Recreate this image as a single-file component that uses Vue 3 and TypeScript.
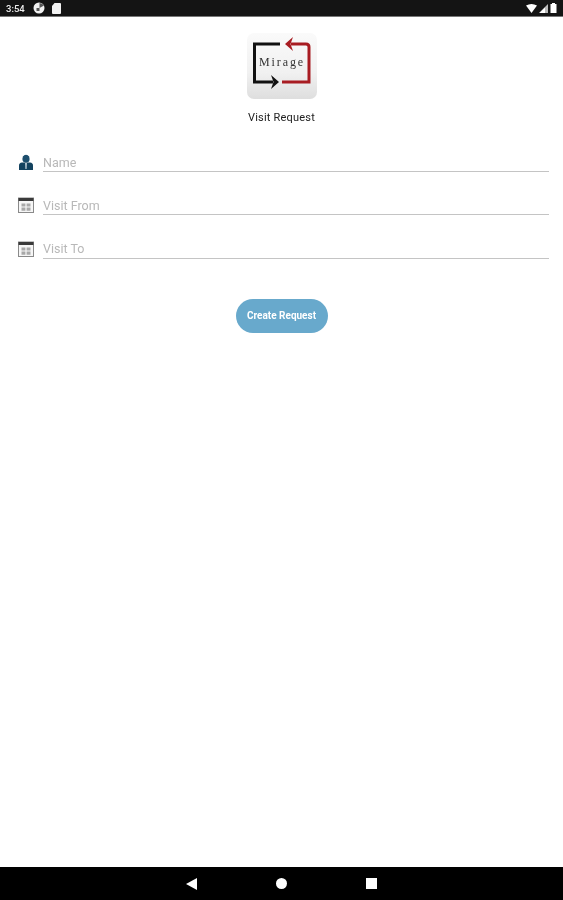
<script setup lang="ts">
const fields = [
  { key: "name", label: "Name", icon: "person" },
  { key: "from", label: "Visit From", icon: "calendar" },
  { key: "to", label: "Visit To", icon: "calendar" },
];
</script>

<template>
  <div class="screen">
    <header class="status-bar">
      <div class="status-left">
        <span class="clock">3:54</span>
        <svg class="status-icon" width="12" height="12" viewBox="0 0 12 12">
          <circle cx="6" cy="6" r="5.5" fill="#f2f2f2" />
          <path d="M6.5 6 L11 3.5 A5.5 5.5 0 0 0 6.5 1 Z M3.5 6 h3 v3 h-3z" fill="#555" />
        </svg>
        <svg class="status-icon" width="9" height="11" viewBox="0 0 9 11">
          <path d="M2.5 0 H8 a1 1 0 0 1 1 1 V10 a1 1 0 0 1 -1 1 H1 a1 1 0 0 1 -1 -1 V3 Z" fill="#f2f2f2" />
        </svg>
      </div>
      <div class="status-right">
        <svg width="11" height="9" viewBox="0 0 11 9"><path d="M0 1.5 Q5.5 -1.5 11 1.5 L5.5 9 Z" fill="#fff" /></svg>
        <svg width="9" height="9" viewBox="0 0 9 9"><path d="M9 0 V9 H0 Z" fill="#bbb" /><path d="M6 3.5 V9 H0.5 Z" fill="#fff" /></svg>
        <svg width="7" height="10" viewBox="0 0 7 10"><path d="M2 0 H5 V1 H6.5 V10 H.5 V1 H2 Z" fill="#fff" /></svg>
      </div>
    </header>

    <main class="content">
      <div class="logo">
        <svg width="58" height="50" viewBox="0 0 58 50">
          <path d="M27 1 H1.5 V39 H20" fill="none" stroke="#111" stroke-width="3" />
          <path d="M18 32 L26 39 L18 46 L20.5 39 Z" fill="#111" />
          <path d="M29 39 H56 V4 Q56 1 53 1 H38" fill="none" stroke="#a81c22" stroke-width="3" />
          <path d="M40 -6 L32 1 L40 8 L37.5 1 Z" fill="#a81c22" />
          <text x="29" y="23" text-anchor="middle" class="logo-text">Mirage</text>
        </svg>
      </div>
      <h1 class="title">Visit Request</h1>

      <form class="fields" @submit.prevent>
        <div v-for="field in fields" :key="field.key" class="field" :class="field.key">
          <svg v-if="field.icon === 'person'" class="field-icon" width="16" height="16" viewBox="0 0 16 16">
            <circle cx="8" cy="5" r="3.6" fill="#1d4f6e" />
            <path d="M4.5 3 Q8 -1.5 11.5 3 Z" fill="#1d4f6e" />
            <path d="M1 16 V11.5 Q1 9 4 8.6 H12 Q15 9 15 11.5 V16 Z" fill="#13425f" />
            <path d="M7.2 9 H8.8 L8.5 15 H7.5 Z" fill="#d7e3ea" />
          </svg>
          <svg v-else class="field-icon" width="16" height="16" viewBox="0 0 16 16">
            <rect x=".5" y="1" width="15" height="14.5" fill="#f6f6f6" stroke="#8a8a8a" />
            <rect x=".5" y="1" width="15" height="3" fill="#3a3a3a" />
            <path d="M3.5 6.5 H7.4 V9.6 H3.5 Z M8.6 6.5 H12.5 V9.6 H8.6 Z M3.5 10.6 H7.4 V13.7 H3.5 Z M8.6 10.6 H12.5 V13.7 H8.6 Z" fill="#a8a8a8" />
          </svg>
          <div class="input-line">{{ field.label }}</div>
        </div>
      </form>

      <button type="button" class="create-btn">Create Request</button>
    </main>

    <nav class="nav-bar">
      <svg width="11" height="12" viewBox="0 0 11 12"><path d="M11 0 V12 L0 6 Z" fill="#fff" /></svg>
      <span class="nav-home"></span>
      <span class="nav-recent"></span>
    </nav>
  </div>
</template>

<style scoped>
.screen {
  width: 563px;
  height: 900px;
  display: flex;
  flex-direction: column;
  background: #fff;
  font-family: Roboto, "Liberation Sans", sans-serif;
  overflow: hidden;
}

.status-bar {
  height: 16px;
  flex: 0 0 auto;
  background: #141414;
  border-bottom: 1px solid #777;
  box-sizing: content-box;
  display: flex;
  align-items: center;
  justify-content: space-between;
  padding: 0 6px 0 6px;
  color: #eee;
  filter: blur(0.4px);
}

.status-left {
  display: flex;
  align-items: center;
}

.clock {
  font-size: 9.5px;
  font-weight: 500;
  width: 27px;
}

.status-icon {
  margin-right: 7px;
}

.status-right {
  display: flex;
  align-items: center;
  gap: 2px;
}

.content {
  flex: 1 1 auto;
  display: flex;
  flex-direction: column;
  align-items: center;
  padding-top: 16px;
  filter: blur(0.6px);
}

.logo {
  width: 70px;
  height: 66px;
  border-radius: 7px;
  background: linear-gradient(#fafafa 0%, #f1f1f1 60%, #dedede 100%);
  display: flex;
  justify-content: center;
  padding-top: 10px;
  box-sizing: border-box;
}

.logo svg {
  overflow: visible;
}

.logo-text {
  font-family: "Liberation Serif", serif;
  font-size: 12px;
  letter-spacing: 1.9px;
  fill: #333;
}

.title {
  margin: 12px 0 0;
  font-size: 11px;
  line-height: 14px;
  font-weight: 400;
  letter-spacing: 0.2px;
  color: #222;
}

.fields {
  align-self: stretch;
  display: flex;
  flex-direction: column;
  padding: 24px 14px 0 18px;
}

.field {
  display: flex;
  align-items: flex-end;
  gap: 9px;
}

.field.from {
  margin-top: 20px;
}

.field.to {
  margin-top: 21px;
}

.field.to .input-line {
  line-height: 25px;
}

.field-icon {
  flex: 0 0 auto;
  margin-bottom: 2px;
}

.input-line {
  flex: 1 1 auto;
  height: 22px;
  line-height: 27px;
  font-size: 12.5px;
  color: #b8b8b8;
  border-bottom: 1px solid #c4c4c4;
}

.create-btn {
  margin-top: 40px;
  width: 92px;
  height: 34px;
  border: none;
  border-radius: 17px;
  background: #68a9cc;
  color: #fff;
  font-family: inherit;
  font-size: 10px;
  font-weight: 700;
  padding: 0 0 2px;
}

.nav-bar {
  height: 33px;
  flex: 0 0 auto;
  background: #000;
  display: flex;
  align-items: center;
  justify-content: center;
  gap: 79px;
  padding-right: 1px;
}

.nav-home {
  width: 11px;
  height: 11px;
  border-radius: 50%;
  background: #fff;
}

.nav-recent {
  width: 11px;
  height: 11px;
  background: #fff;
}
</style>

<style>
html,
body {
  margin: 0;
  background: #fff;
}
</style>
